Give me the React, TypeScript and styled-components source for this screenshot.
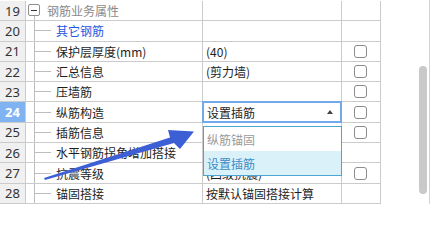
import React from 'react';
import styled, { createGlobalStyle } from 'styled-components';

const GlobalStyle = createGlobalStyle`
  html, body {
    margin: 0;
    padding: 0;
    background: #fff;
  }
  body {
    font-family: "Noto Sans CJK SC", "Noto Sans", sans-serif;
    overflow: hidden;
  }
`;

const Page = styled.div`
  position: relative;
  width: 430px;
  height: 204px;
  display: flex;
  border-right: 1px solid #d2d2d2;
  box-sizing: border-box;
  overflow: hidden;
`;

const Grid = styled.div`
  width: 381px;
  margin-top: 1px;
  display: flex;
  flex-direction: column;
`;

const Row = styled.div`
  display: grid;
  grid-template-columns: 26px 177px 139px 39px;
  height: 21px;
  border-bottom: 1px solid #cbcbcb;
  box-sizing: border-box;
`;

const Cell = styled.div`
  position: relative;
  display: flex;
  align-items: center;
  border-right: 1px solid #cbcbcb;
  box-sizing: border-box;
  font-size: 12px;
  color: #1e1e1e;
  white-space: nowrap;
  overflow: hidden;
`;

const NumCell = styled(Cell)<{ active?: boolean }>`
  justify-content: center;
  font-family: "Noto Sans", sans-serif;
  font-size: 13px;
  background: ${p => (p.active ? '#7fb3f1' : '#f0f0f0')};
  color: ${p => (p.active ? '#fff' : '#333')};
  font-weight: ${p => (p.active ? 700 : 400)};
`;

const NameText = styled.span<{ tone?: 'group' | 'link' }>`
  color: ${p => (p.tone === 'group' ? '#8a8a8a' : p.tone === 'link' ? '#2457e0' : '#1e1e1e')};
`;

const Guide = styled.span`
  flex: none;
  width: 28px;
  height: 100%;
  margin-right: 2px;
  background-image: linear-gradient(#bdbdbd, #bdbdbd), linear-gradient(#bdbdbd, #bdbdbd);
  background-size: 1px 100%, 16px 1px;
  background-position: 8px 0, 9px 50%;
  background-repeat: no-repeat;
`;

const GroupGuide = styled.span`
  flex: none;
  width: 21px;
  height: 100%;
  display: flex;
  align-items: flex-start;
  padding-top: 3px;
  box-sizing: border-box;
  background-image: linear-gradient(#bdbdbd, #bdbdbd);
  background-size: 1px 6px;
  background-position: 8px 100%;
  background-repeat: no-repeat;
`;

const Toggle = styled.span`
  width: 12px;
  height: 12px;
  margin-left: 2px;
  border: 1px solid #8e8e8e;
  border-radius: 2px;
  box-sizing: border-box;
  background: #fff;
  display: flex;
  align-items: center;
  justify-content: center;

  &::before {
    content: '';
    width: 6px;
    height: 1px;
    background: #333;
  }
`;

const ValueCell = styled(Cell)<{ editing?: boolean }>`
  padding-left: 3px;
  ${p =>
    p.editing &&
    `
    margin: -1px 0 -1px -1px;
    padding-left: 3px;
    border: 2px solid #72a9ec;
    background: #fff;
    justify-content: space-between;
    padding-right: 7px;
  `}
`;

const Caret = styled.span`
  width: 0;
  height: 0;
  border-left: 3px solid transparent;
  border-right: 3px solid transparent;
  border-bottom: 4px solid #444;
`;

const CheckCell = styled(Cell)`
  justify-content: center;
`;

const Checkbox = styled.span`
  width: 13px;
  height: 13px;
  border: 1px solid #8c8c8c;
  border-radius: 3px;
  box-sizing: border-box;
  margin-left: -2px;
`;

const ScrollArea = styled.div`
  flex: 1;
  display: flex;
  justify-content: flex-end;
  padding: 66px 2px 0 0;
`;

const Thumb = styled.div`
  width: 8px;
  height: 128px;
  border-radius: 4px;
  background: #c9c9c9;
`;

const Dropdown = styled.ul`
  position: absolute;
  left: 203px;
  top: 126px;
  width: 139px;
  margin: 0;
  padding: 0;
  list-style: none;
  border: 1px solid #4ea5d4;
  box-sizing: border-box;
  background: #fff;
`;

const Option = styled.li<{ selected?: boolean }>`
  height: 24px;
  display: flex;
  align-items: center;
  padding-left: 3px;
  font-size: 12px;
  color: ${p => (p.selected ? '#3a8cc4' : '#9a9a9a')};
  background: ${p => (p.selected ? '#daf1fa' : '#fff')};
`;

const Annotation = styled.svg`
  position: absolute;
  left: 0;
  top: 0;
  pointer-events: none;
`;

type Item = {
  no: number;
  name: string;
  value?: string;
  check?: boolean;
  kind?: 'group' | 'link';
  editing?: boolean;
};

const rows: Item[] = [
  { no: 19, name: '钢筋业务属性', kind: 'group' },
  { no: 20, name: '其它钢筋', kind: 'link' },
  { no: 21, name: '保护层厚度(mm)', value: '(40)', check: true },
  { no: 22, name: '汇总信息', value: '(剪力墙)', check: true },
  { no: 23, name: '压墙筋', check: true },
  { no: 24, name: '纵筋构造', value: '设置插筋', check: true, editing: true },
  { no: 25, name: '插筋信息', check: true },
  { no: 26, name: '水平钢筋拐角增加搭接' },
  { no: 27, name: '抗震等级', value: '(四级抗震)', check: true },
  { no: 28, name: '锚固搭接', value: '按默认锚固搭接计算' },
];

const App: React.FC = () => {
  return (
    <>
      <GlobalStyle />
      <Page>
        <Grid>
          {rows.map(r => (
            <Row key={r.no}>
              <NumCell active={r.editing}>{r.no}</NumCell>
              <Cell>
                {r.kind === 'group' ? (
                  <GroupGuide>
                    <Toggle />
                  </GroupGuide>
                ) : (
                  <Guide />
                )}
                <NameText tone={r.kind}>{r.name}</NameText>
              </Cell>
              <ValueCell editing={r.editing}>
                {r.value}
                {r.editing && <Caret />}
              </ValueCell>
              <CheckCell>{r.check && <Checkbox />}</CheckCell>
            </Row>
          ))}
        </Grid>
        <ScrollArea>
          <Thumb />
        </ScrollArea>
        <Dropdown>
          <Option>纵筋锚固</Option>
          <Option selected>设置插筋</Option>
        </Dropdown>
        <Annotation width="432" height="204" viewBox="0 0 432 204">
          <polygon
            points="44,178 170,137.5 168,130 194,131.5 180,149 174,143 45,180"
            fill="#3d5fd6"
          />
        </Annotation>
      </Page>
    </>
  );
};

export default App;
